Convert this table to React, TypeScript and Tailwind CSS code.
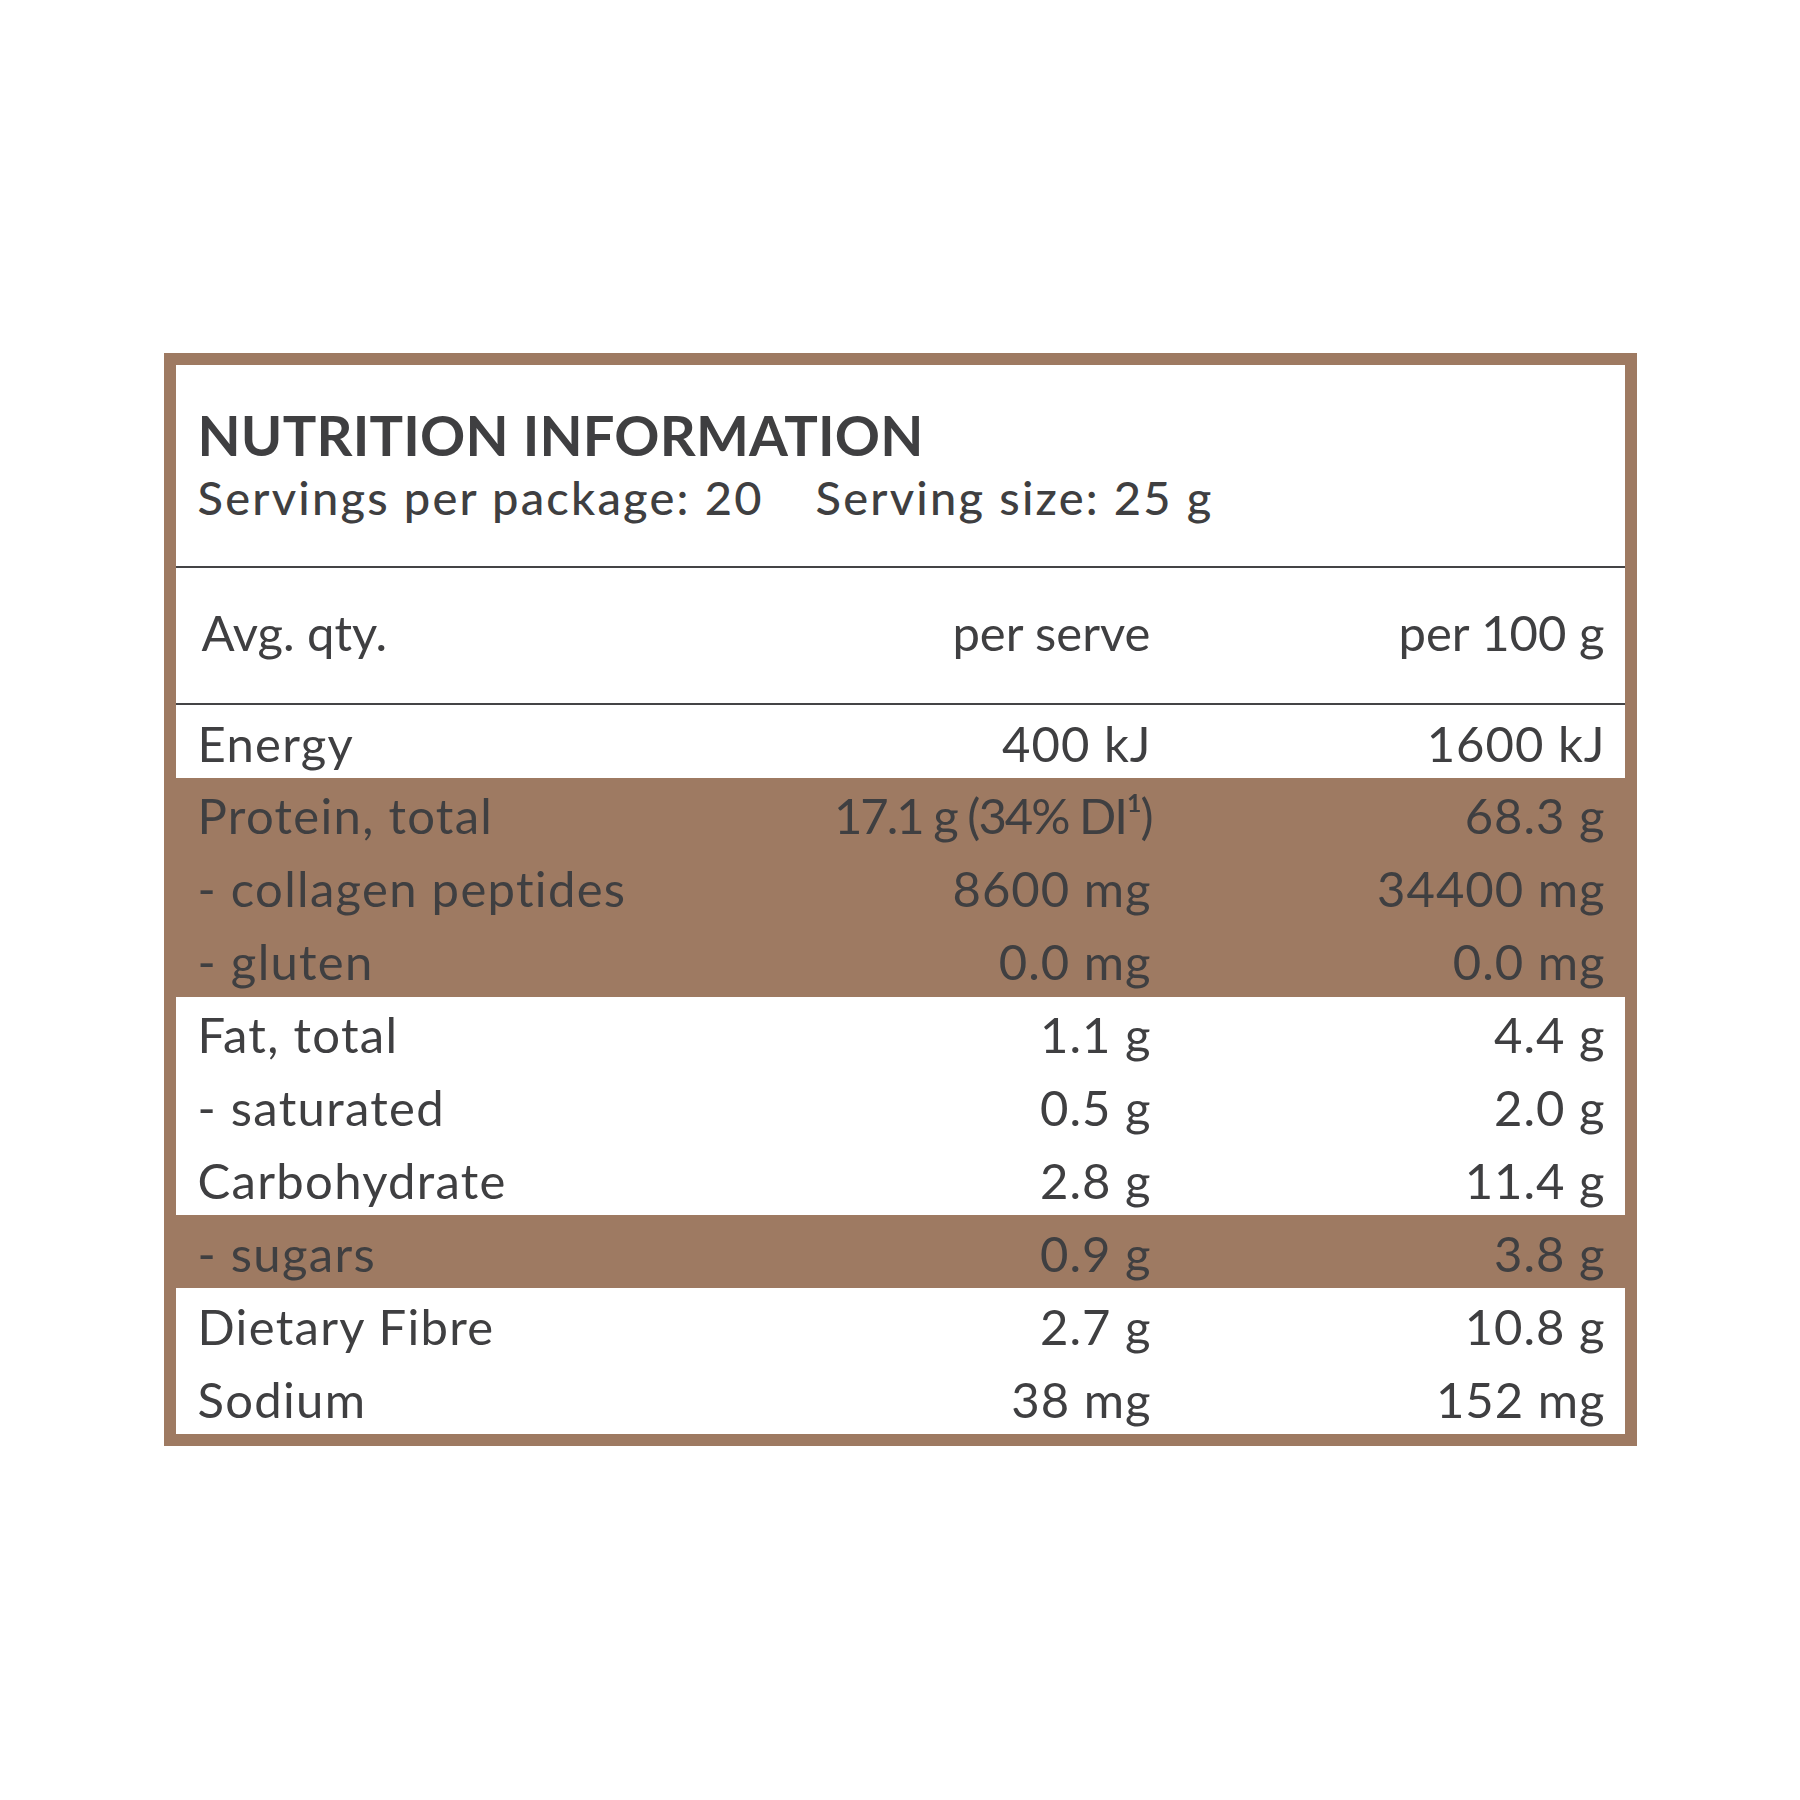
const rows = [
    { label: "Energy", serve: "400 kJ", per100: "1600 kJ", shade: false },
    { label: "Protein, total", serve: "17.1 g (34% DI¹)", per100: "68.3 g", shade: true, tight: true },
    { label: "- collagen peptides", serve: "8600 mg", per100: "34400 mg", shade: true },
    { label: "- gluten", serve: "0.0 mg", per100: "0.0 mg", shade: true },
    { label: "Fat, total", serve: "1.1 g", per100: "4.4 g", shade: false },
    { label: "- saturated", serve: "0.5 g", per100: "2.0 g", shade: false },
    { label: "Carbohydrate", serve: "2.8 g", per100: "11.4 g", shade: false },
    { label: "- sugars", serve: "0.9 g", per100: "3.8 g", shade: true },
    { label: "Dietary Fibre", serve: "2.7 g", per100: "10.8 g", shade: false },
    { label: "Sodium", serve: "38 mg", per100: "152 mg", shade: false },
];

export default function App() {
    return (
        <div className="min-h-[1800px] w-full bg-white flex justify-center pt-[353px] font-['Lato',_sans-serif] text-[#3f3f41]">
            <div className="w-[1473px] h-[1093px] border-[12px] border-[#9e7a62] bg-white flex flex-col">
                <div className="pl-[22px] pt-[42px] pb-[45px] border-b-2 border-[#444446]">
                    <h1 className="text-[56px] leading-none font-bold tracking-[0.2px]">
                        NUTRITION INFORMATION
                    </h1>
                    <p className="mt-[11px] text-[47px] leading-none font-medium tracking-[2.2px] flex gap-[52px]">
                        <span>Servings per package: 20</span>
                        <span>Serving size: 25 g</span>
                    </p>
                </div>
                <div className="grid grid-cols-[525px_476px_448px] h-[137px] items-center pb-[6px] border-b-2 border-[#444446] text-[49px]">
                    <span className="pl-[26px]">Avg. qty.</span>
                    <span className="text-right pr-[26px]">per serve</span>
                    <span className="text-right pr-[20px]">per 100 g</span>
                </div>
                <div className="flex-1 flex flex-col">
                    {rows.map((r) => (
                        <div
                            key={r.label}
                            className={`grid grid-cols-[525px_476px_448px] flex-1 items-center pt-[3px] text-[49px] leading-[1.2] ${
                                r.shade ? "bg-[#9e7a62]" : "bg-white"
                            }`}
                        >
                            <span className="pl-[22px] whitespace-nowrap tracking-[1.3px]">{r.label}</span>
                            <span
                                className={`text-right pr-[25px] whitespace-nowrap ${
                                    r.tight ? "tracking-[-2px]" : "tracking-[1px]"
                                }`}
                            >
                                {r.serve}
                            </span>
                            <span className="text-right pr-[19px] whitespace-nowrap tracking-[1px]">{r.per100}</span>
                        </div>
                    ))}
                </div>
            </div>
        </div>
    );
}
